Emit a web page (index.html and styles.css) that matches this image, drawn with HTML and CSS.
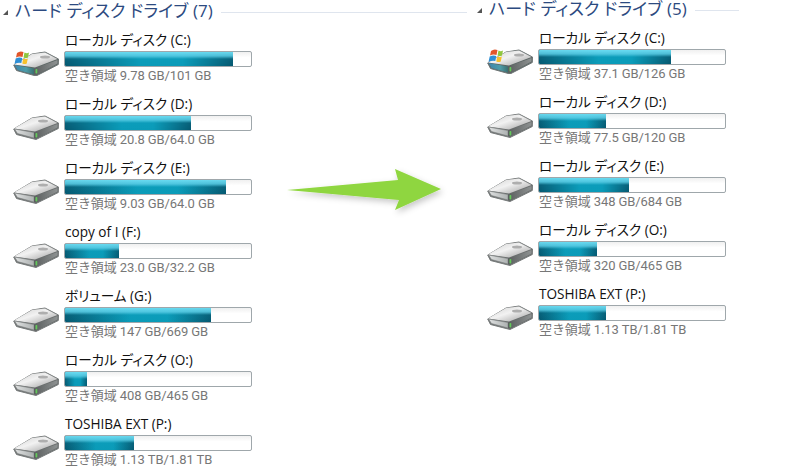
FILE: index.html
```html
<!DOCTYPE html>
<html lang="ja">
<head>
<meta charset="utf-8">
<title>ハード ディスク ドライブ</title>
<link rel="stylesheet" href="styles.css">
</head>
<body>
<svg class="defs" width="0" height="0" aria-hidden="true">
  <defs>
    <linearGradient id="top" x1="0" y1="0" x2="1" y2="1"><stop offset="0" stop-color="#cfcfcf"/><stop offset=".45" stop-color="#f2f2f2"/><stop offset="1" stop-color="#9c9c9c"/></linearGradient>
    <linearGradient id="front" x1="0" y1="0" x2="1" y2="0"><stop offset="0" stop-color="#dfe1e1"/><stop offset="1" stop-color="#aeb2b2"/></linearGradient>
    <linearGradient id="side" x1="0" y1="0" x2="1" y2="0"><stop offset="0" stop-color="#5a5e5e"/><stop offset="1" stop-color="#8e9292"/></linearGradient>
    <linearGradient id="frontc" x1="0" y1="0" x2="1" y2="0"><stop offset="0" stop-color="#3d85ad"/><stop offset=".6" stop-color="#4d9ca8"/><stop offset="1" stop-color="#3b6f70"/></linearGradient>
    <filter id="soft" x="-20%" y="-40%" width="140%" height="190%"><feDropShadow dx="2" dy="3" stdDeviation="3" flood-color="#000" flood-opacity=".22"/></filter>
    <symbol id="drive" viewBox="0 0 46 25">
      <path d="M.700 14 L3.500 19.500 L23 24.500 L45.300 13.500 L45.500 8 L32 1 L19 3 Z" fill="#6a6e6e" stroke="#777b7b" stroke-width="1" stroke-linejoin="round"/>
      <path d="M1 13.500 L19 3 L32 1.500 L44.500 8 L22 16.500 Z" fill="url(#top)"/>
      <ellipse cx="30" cy="6" rx="5" ry="1.500" fill="#aeaeae"/>
      <path d="M1.500 14 L21 17.500 L21 23 L4.500 18.500 Z" fill="url(#front)" stroke="#7d8181" stroke-width=".6"/>
      <path d="M21 17.500 L44.500 9 L44.500 12.500 L23.500 23.500 L21 23 Z" fill="url(#side)"/>
      <rect x="22.500" y="18" width="1.800" height="4.500" rx=".7" fill="#63c85a"/>
    </symbol>
    <symbol id="system" viewBox="0 0 46 25">
      <path d="M.700 14 L3.500 19.500 L23 25 L45.300 13.500 L45.500 8 L32 1 L19 3 Z" fill="#5c6665" stroke="#6f7676" stroke-width="1" stroke-linejoin="round"/>
      <path d="M1 13.500 L19 3 L32 1.500 L44.500 8 L22 16.500 Z" fill="url(#top)"/>
      <ellipse cx="32" cy="6" rx="5" ry="1.500" fill="#aeaeae"/>
      <path d="M1.500 14 L21 17.500 L21 23.500 L4.500 19 Z" fill="url(#frontc)"/>
      <path d="M21 17.500 L44.500 9 L44.500 12.500 L23.500 24 L21 23.500 Z" fill="url(#side)"/>
      <rect x="22.500" y="18" width="1.800" height="4.500" rx=".7" fill="#63c85a"/>
      <path d="M4 2 Q7 -.500 10.500 1 L9.500 6 Q6 5 3 6.500 Z" fill="#e2562b"/>
      <path d="M11.500 1.500 Q14 3 16 1.500 L15 6.500 Q13 7.500 10.500 6.500 Z" fill="#8fc63e"/>
      <path d="M2.700 7.500 Q6 6 9.300 7 L8.300 12 Q5 11 1.500 13 Z" fill="#2e8fd6"/>
      <path d="M10.300 7.500 Q12.800 8.500 14.800 7.500 L13.800 12.500 Q12 13.500 9.300 12.500 Z" fill="#f6c12d"/>
    </symbol>
    <symbol id="right-arrow" viewBox="0 0 170 60">
      <path d="M2 25 L113 15 L110 4 L156 24 L110 45 L114 35 Z" fill="#8fd63f" filter="url(#soft)"/>
    </symbol>
  </defs>
</svg>
<main class="page">
  <section class="panel panel-left">
    <h2 class="heading"><span class="caret"></span><span>ハード ディスク ドライブ (7)</span><span class="rule"></span></h2>
    <div class="drive"><svg class="icon"><use href="#system"/></svg><div class="info"><div class="name">ローカル ディスク (C:)</div><div class="bar"><div class="fill" style="width:90.500%"></div></div><div class="free">空き領域 9.78 GB/101 GB</div></div></div>
    <div class="drive"><svg class="icon"><use href="#drive"/></svg><div class="info"><div class="name">ローカル ディスク (D:)</div><div class="bar"><div class="fill" style="width:68%"></div></div><div class="free">空き領域 20.8 GB/64.0 GB</div></div></div>
    <div class="drive"><svg class="icon"><use href="#drive"/></svg><div class="info"><div class="name">ローカル ディスク (E:)</div><div class="bar"><div class="fill" style="width:86.500%"></div></div><div class="free">空き領域 9.03 GB/64.0 GB</div></div></div>
    <div class="drive"><svg class="icon"><use href="#drive"/></svg><div class="info"><div class="name">copy of I (F:)</div><div class="bar"><div class="fill" style="width:29%"></div></div><div class="free">空き領域 23.0 GB/32.2 GB</div></div></div>
    <div class="drive"><svg class="icon"><use href="#drive"/></svg><div class="info"><div class="name">ボリューム (G:)</div><div class="bar"><div class="fill" style="width:78.500%"></div></div><div class="free">空き領域 147 GB/669 GB</div></div></div>
    <div class="drive"><svg class="icon"><use href="#drive"/></svg><div class="info"><div class="name">ローカル ディスク (O:)</div><div class="bar"><div class="fill" style="width:12%"></div></div><div class="free">空き領域 408 GB/465 GB</div></div></div>
    <div class="drive"><svg class="icon"><use href="#drive"/></svg><div class="info"><div class="name">TOSHIBA EXT (P:)</div><div class="bar"><div class="fill" style="width:37%"></div></div><div class="free">空き領域 1.13 TB/1.81 TB</div></div></div>
  </section>
  <section class="panel panel-right">
    <h2 class="heading"><span class="caret"></span><span>ハード ディスク ドライブ (5)</span><span class="rule"></span></h2>
    <div class="drive"><svg class="icon"><use href="#system"/></svg><div class="info"><div class="name">ローカル ディスク (C:)</div><div class="bar"><div class="fill" style="width:71%"></div></div><div class="free">空き領域 37.1 GB/126 GB</div></div></div>
    <div class="drive"><svg class="icon"><use href="#drive"/></svg><div class="info"><div class="name">ローカル ディスク (D:)</div><div class="bar"><div class="fill" style="width:36%"></div></div><div class="free">空き領域 77.5 GB/120 GB</div></div></div>
    <div class="drive"><svg class="icon"><use href="#drive"/></svg><div class="info"><div class="name">ローカル ディスク (E:)</div><div class="bar"><div class="fill" style="width:48.500%"></div></div><div class="free">空き領域 348 GB/684 GB</div></div></div>
    <div class="drive"><svg class="icon"><use href="#drive"/></svg><div class="info"><div class="name">ローカル ディスク (O:)</div><div class="bar"><div class="fill" style="width:31%"></div></div><div class="free">空き領域 320 GB/465 GB</div></div></div>
    <div class="drive"><svg class="icon"><use href="#drive"/></svg><div class="info"><div class="name">TOSHIBA EXT (P:)</div><div class="bar"><div class="fill" style="width:36%"></div></div><div class="free">空き領域 1.13 TB/1.81 TB</div></div></div>
  </section>
  <svg class="big-arrow" aria-hidden="true"><use href="#right-arrow"/></svg>
</main>
</body>
</html>
```

FILE: styles.css
```css
* {
  box-sizing: border-box;
}

html,
body {
  margin: 0;
  height: 469px;
  overflow: hidden;
  background: #fff;
}

body {
  font-family: "Open Sans", "Noto Sans CJK JP", sans-serif;
  font-feature-settings: "palt";
}

.defs {
  position: absolute;
}

.page {
  position: relative;
  display: flex;
  height: 469px;
}

.panel {
  display: flex;
  flex-direction: column;
}

.panel-left {
  width: 474px;
  padding-top: 2px;
}

.panel-right {
  width: 321px;
}

.heading {
  display: flex;
  flex: none;
  align-items: center;
  height: 18px;
  margin: 0 0 15px;
  padding-left: 3px;
  font-size: 17px;
  font-weight: 400;
  line-height: 18px;
  letter-spacing: 0.12px;
  color: #2c4a80;
  white-space: nowrap;
}

.caret {
  width: 0;
  height: 0;
  margin: 3px 7px 0 0;
  border-style: solid;
  border-width: 0 0 5px 5px;
  border-color: transparent transparent #555 transparent;
}

.rule {
  flex: 1;
  height: 1px;
  margin: 3px 7px 0 8px;
  background: #dfe5ee;
}

.panel-right .rule {
  flex: none;
  width: 44px;
}

.drive {
  display: flex;
  flex: none;
  align-items: flex-start;
  height: 64px;
}

.icon {
  flex: none;
  width: 46px;
  height: 25px;
  margin: 16px 0 0 13px;
}

.info {
  width: 188px;
  margin-left: 5px;
}

.name {
  height: 16px;
  margin: -3px 0 3px 1px;
  font-size: 13.600px;
  line-height: 16px;
  color: #111;
  white-space: nowrap;
}

.bar {
  height: 16px;
  border: 1px solid #9fa7ab;
  border-radius: 2px;
  background: linear-gradient(#f0f0f0, #fff 40%);
  overflow: hidden;
}

.fill {
  height: 100%;
  background:
    linear-gradient(rgba(110, 222, 244, 0.95) 0, rgba(90, 205, 230, 0.85) 28%, rgba(30, 170, 200, 0.1) 50%, rgba(0, 0, 0, 0) 100%),
    linear-gradient(90deg, #055870 0, #0a9bb8 45%, #0a9bb8 70%, #055870 100%);
}

.free {
  margin: 0 0 0 1px;
  font-family: Roboto, "Noto Sans CJK JP", sans-serif;
  font-feature-settings: normal;
  font-size: 13px;
  line-height: 17px;
  letter-spacing: -0.1px;
  color: #777;
  white-space: nowrap;
}

.big-arrow {
  position: absolute;
  left: 285px;
  top: 165px;
  width: 170px;
  height: 60px;
}
```
